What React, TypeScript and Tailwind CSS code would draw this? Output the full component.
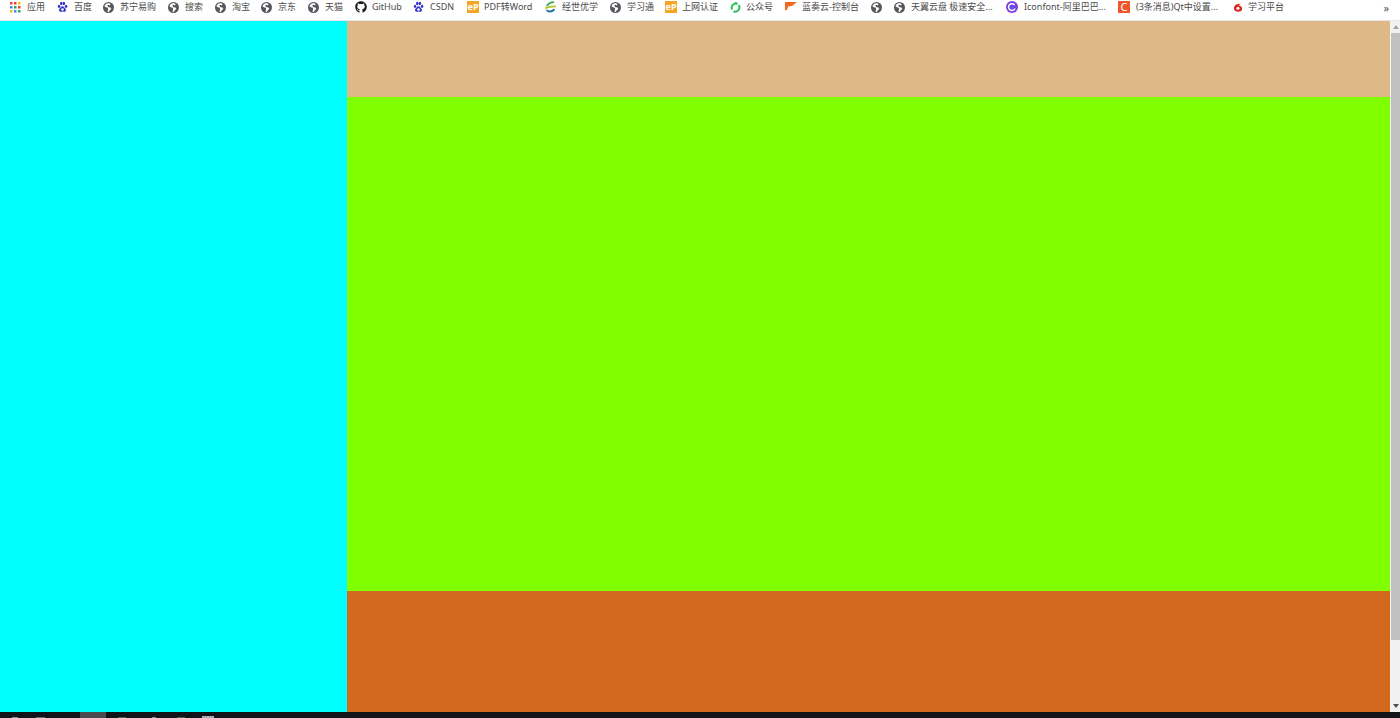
import { FaGithub } from "react-icons/fa";

const Globe = () => (
  <svg viewBox="0 0 16 16" className="w-[11px] h-[11px] shrink-0">
    <circle cx="8" cy="8" r="8" fill="#55595e" />
    <path d="M8 1.500 4 3 2 6l3 2 2 .5.5 2-1 3 1.500 1.500 2-3 2-2-1-2-3-.5L6 5l2-1 2 1 1-2z" fill="#fff" />
  </svg>
);

const Baidu = () => (
  <svg viewBox="0 0 16 16" className="w-[11px] h-[12px] shrink-0" fill="#3333cc">
    <ellipse cx="3" cy="7" rx="1.800" ry="2.300" />
    <ellipse cx="6.200" cy="3" rx="1.800" ry="2.500" />
    <ellipse cx="10" cy="3" rx="1.800" ry="2.500" />
    <ellipse cx="13.200" cy="7" rx="1.800" ry="2.300" />
    <path d="M8 7c2 0 2.500 2 4 3 2 1.500 1 5-1.500 5-1 0-1.500-.5-2.500-.5s-1.500.5-2.500.5C3 15 2 11.500 4 10c1.500-1 2-3 4-3z" />
    <ellipse cx="8" cy="11.500" rx="2" ry="1.800" fill="#fff" />
  </svg>
);

const Apps = () => (
  <svg viewBox="0 0 11 11" className="w-[11px] h-[11px] shrink-0">
    <rect x="0" y="0" width="2.500" height="2.500" fill="#ea4335" />
    <rect x="4" y="0" width="2.500" height="2.500" fill="#ea4335" />
    <rect x="8" y="0" width="2.500" height="2.500" fill="#fbbc05" />
    <rect x="0" y="4" width="2.500" height="2.500" fill="#4285f4" />
    <rect x="4" y="4" width="2.500" height="2.500" fill="#34a853" />
    <rect x="8" y="4" width="2.500" height="2.500" fill="#ea4335" />
    <rect x="0" y="8" width="2.500" height="2.500" fill="#fbbc05" />
    <rect x="4" y="8" width="2.500" height="2.500" fill="#4285f4" />
    <rect x="8" y="8" width="2.500" height="2.500" fill="#34a853" />
  </svg>
);

const EP = () => (
  <span className="w-[12px] h-[12px] -mr-[1px] shrink-0 bg-[#f5a623] text-white text-[9px] leading-[12px] text-center font-bold overflow-hidden">eP</span>
);

const Jingshi = () => (
  <svg viewBox="0 0 16 16" className="w-[11px] h-[12px] shrink-0" fill="none" strokeWidth="2.600" strokeLinecap="round">
    <path d="M3 6c2-3 6-5 9-5" stroke="#3aa655" />
    <path d="M1 9.500c4-2 9-2.500 14-2.500" stroke="#b5c42c" />
    <path d="M3 13c3 2 7 2 10-1" stroke="#1f6fa8" />
  </svg>
);

const Recycle = () => (
  <svg viewBox="0 0 16 16" className="w-[11px] h-[11px] -mr-[1px] shrink-0" fill="none" stroke="#2fc05f" strokeWidth="3">
    <path d="M10 2.400A6 6 0 0 0 3.200 11" />
    <path d="M12.500 4.500A6 6 0 0 1 5 13.400" />
    <path d="M7 1.500 11 2.500" />
  </svg>
);

const Flag = () => (
  <svg viewBox="0 0 12 11" className="w-[12px] h-[11px] -mr-[1px] shrink-0">
    <path d="M0 0h12L7 4 3 4.500 2 8H0z" fill="#f26a1b" />
  </svg>
);

const Iconfont = () => (
  <svg viewBox="0 0 16 16" className="w-[12px] h-[12px] shrink-0">
    <circle cx="8" cy="8" r="8" fill="#7a3de0" />
    <path d="M11.500 5.500A4.500 4.500 0 1 0 12 10" fill="none" stroke="#fff" strokeWidth="2" />
    <circle cx="8.500" cy="8.500" r="2" fill="#3c6cf0" />
  </svg>
);

const Csdn = () => (
  <span className="w-[12px] h-[12px] shrink-0 bg-[#f0562b] text-white text-[11px] leading-[12px] text-center">C</span>
);

const Study = () => (
  <svg viewBox="0 0 16 16" className="w-[12px] h-[11px] -mr-[2px] shrink-0">
    <path d="M2 9c0-4 4-7 9-6l-2 2c3 0 5 2 5 5 0 3-3 4-6 4-3 0-6-2-6-5z" fill="#d9281e" />
    <circle cx="8" cy="9" r="2.200" fill="#fff" />
    <path d="M10 1l2 1-1 2z" fill="#e8b01c" />
  </svg>
);

const bookmarks = [
  { icon: <Apps />, label: "应用", w: "w-[47px]" },
  { icon: <Baidu />, label: "百度", w: "w-[46px]" },
  { icon: <Globe />, label: "苏宁易购", w: "w-[65px]" },
  { icon: <Globe />, label: "搜索", w: "w-[47px]" },
  { icon: <Globe />, label: "淘宝", w: "w-[46px]" },
  { icon: <Globe />, label: "京东", w: "w-[47px]" },
  { icon: <Globe />, label: "天猫", w: "w-[47px]" },
  { icon: <FaGithub className="w-[12px] h-[12px] -mr-[1px] shrink-0 text-[#1b1f23]" />, label: "GitHub", w: "w-[58px]" },
  { icon: <Baidu />, label: "CSDN", w: "w-[54px]" },
  { icon: <EP />, label: "PDF转Word", w: "w-[78px]" },
  { icon: <Jingshi />, label: "经世优学", w: "w-[65px]" },
  { icon: <Globe />, label: "学习通", w: "w-[55px]" },
  { icon: <EP />, label: "上网认证", w: "w-[65px]" },
  { icon: <Recycle />, label: "公众号", w: "w-[55px]" },
  { icon: <Flag />, label: "蓝奏云-控制台", w: "w-[86px]" },
  { icon: <Globe />, label: "", w: "w-[23px]" },
  { icon: <Globe />, label: "天翼云盘 极速安全...", w: "w-[112px]" },
  { icon: <Iconfont />, label: "Iconfont-阿里巴巴...", w: "w-[112px]" },
  { icon: <Csdn />, label: "(3条消息)Qt中设置...", w: "w-[114px]" },
  { icon: <Study />, label: "学习平台", w: "w-[60px]" },
];

const BookmarksBar = () => (
  <div className="h-[21px] shrink-0 bg-white border-b border-[#e8e8e8] flex items-center pl-[10px] pr-[11px] pb-[7px] pt-[1px] text-[#4a4a4a]">
    {bookmarks.map((b, i) => (
      <div key={i} className={`${b.w} shrink-0 flex items-center gap-[6px]`}>
        {b.icon}
        {b.label && <span className="text-[9px] leading-[12px] whitespace-nowrap">{b.label}</span>}
      </div>
    ))}
    <span className="ml-auto text-[11px] leading-[11px] text-[#555]">»</span>
  </div>
);

const Scrollbar = () => (
  <div className="w-[10px] shrink-0 bg-[#f1f1f1] border-l border-[#f7f7f7] flex flex-col items-center">
    <div className="h-[12px] shrink-0 flex items-center justify-center">
      <div className="w-0 h-0 border-x-[3px] border-x-transparent border-b-[4px] border-b-[#a3a3a3]" />
    </div>
    <div className="w-full h-[607px] bg-[#c1c1c1]" />
    <div className="flex-1" />
    <div className="h-[12px] shrink-0 flex items-center justify-center">
      <div className="w-0 h-0 border-x-[3px] border-x-transparent border-t-[4px] border-t-[#505050]" />
    </div>
  </div>
);

const Taskbar = () => (
  <div className="h-[6px] shrink-0 bg-[#101418] flex items-end">
    <div className="ml-[12px] w-[6px] h-[1px] bg-[#8a8d90]" />
    <div className="ml-[18px] w-[9px] h-[1px] bg-[#6d7073]" />
    <div className="ml-[35px] w-[26px] h-full bg-[#4a4d50]" />
    <div className="ml-[12px] w-[8px] h-[1px] bg-[#3f6b4a]" />
    <div className="ml-[26px] w-[4px] h-[1px] bg-[#8a8d90]" />
    <div className="ml-[21px] w-[8px] h-[1px] bg-[#3f6b4a]" />
    <div className="ml-[17px] w-[12px] h-[2px] bg-[#a8abae]" />
  </div>
);

export default function App() {
  return (
    <div className="h-screen flex flex-col overflow-hidden font-['Noto_Sans','Noto_Sans_CJK_SC',sans-serif]">
      <BookmarksBar />
      <div className="flex-1 flex min-h-0">
        <aside className="w-[347px] shrink-0 bg-[#00ffff]" />
        <div className="flex-1 flex flex-col">
          <header className="h-[76px] shrink-0 bg-[#deb887]" />
          <main className="flex-1 bg-[#7fff00]" />
          <footer className="h-[121px] shrink-0 bg-[#d2691e]" />
        </div>
        <Scrollbar />
      </div>
      <Taskbar />
    </div>
  );
}
